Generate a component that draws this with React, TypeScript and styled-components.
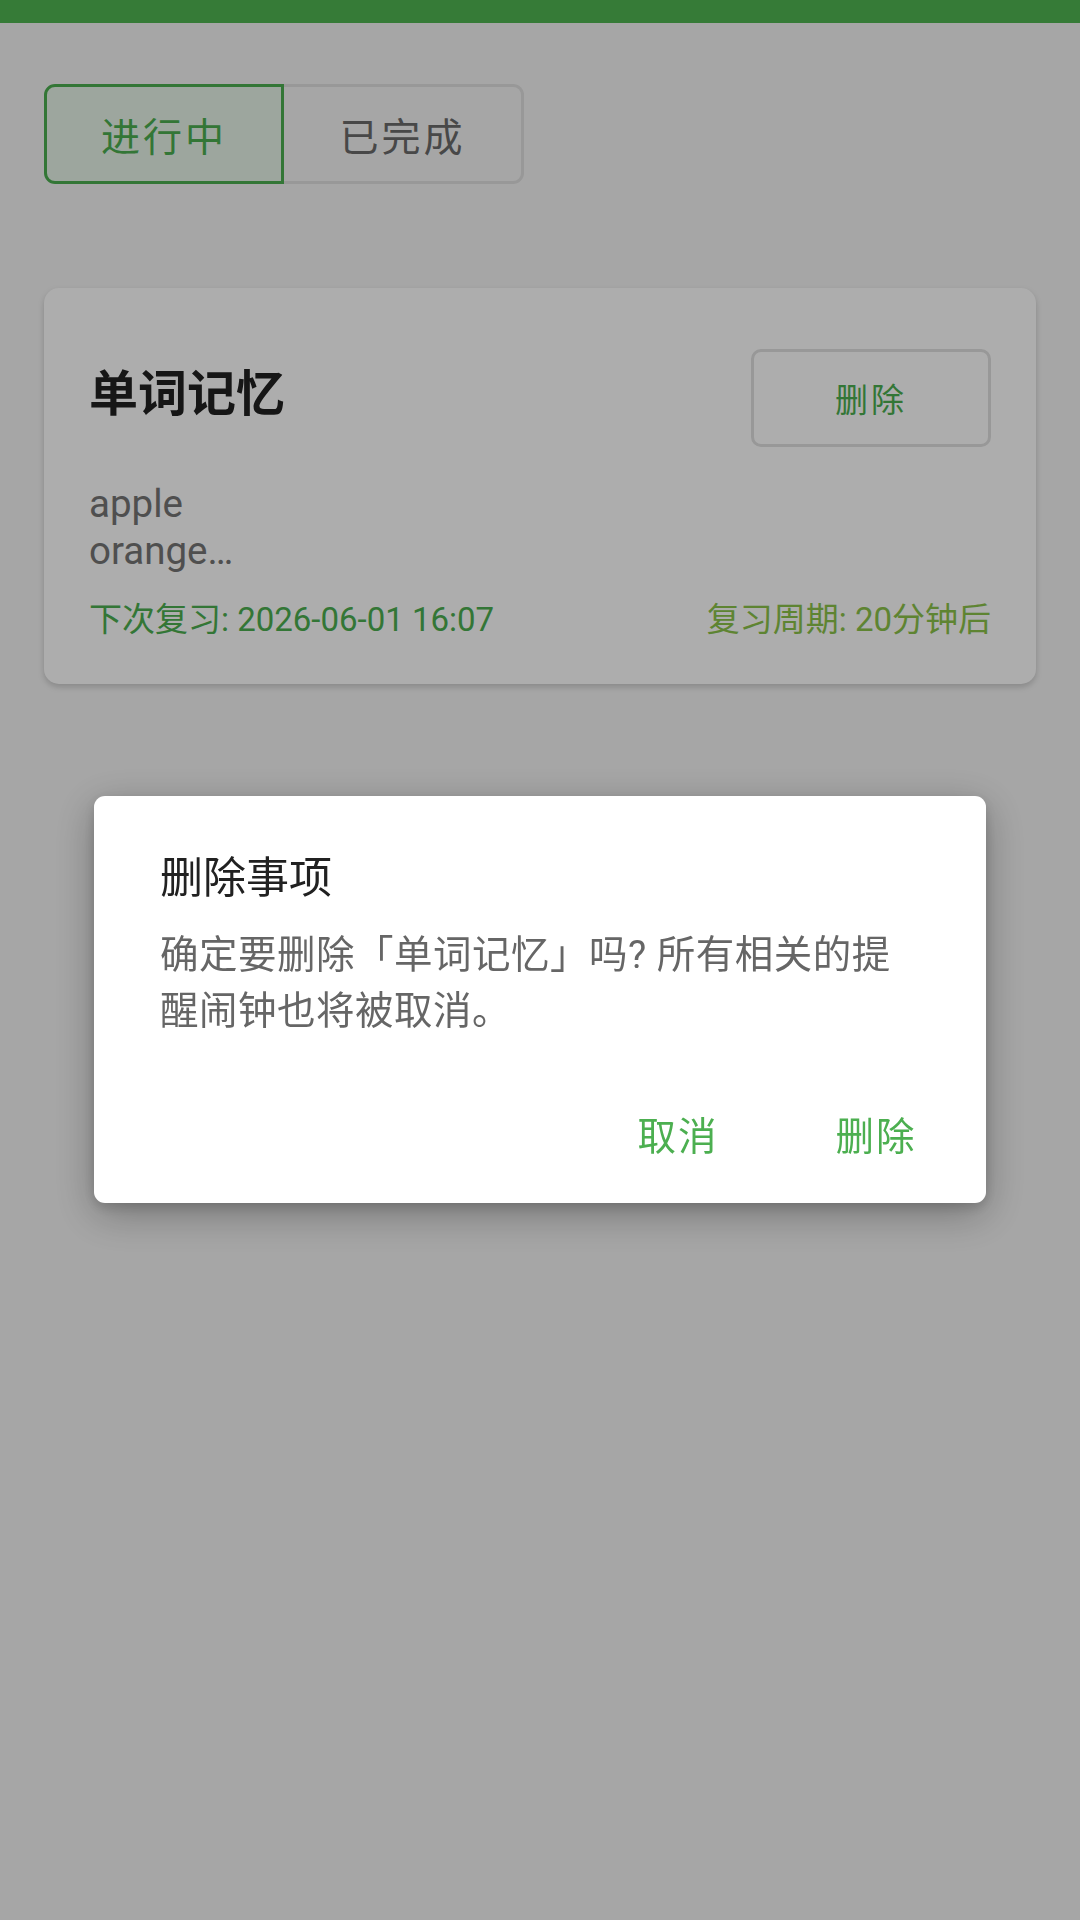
import styled, { createGlobalStyle } from "styled-components";

const GlobalStyle = createGlobalStyle`
  html, body {
    margin: 0;
    padding: 0;
    background: #f5f5f5;
  }
  body {
    font-family: Roboto, "Noto Sans CJK SC", sans-serif;
    -webkit-font-smoothing: antialiased;
  }
  * {
    box-sizing: border-box;
  }
`;

const Screen = styled.div`
  width: 1080px;
  height: 1920px;
  background: #f5f5f5;
  overflow: hidden;
`;

const StatusBar = styled.div`
  height: 23px;
  background: #367b37;
  position: relative;
  z-index: 20;
`;

const Content = styled.div`
  padding: 61px 44px 0;
`;

const Tabs = styled.div`
  display: flex;
`;

const Tab = styled.button<{ $active?: boolean; $side: "left" | "right" }>`
  width: 240px;
  height: 100px;
  margin: 0;
  padding: 0;
  font-family: inherit;
  font-size: 39px;
  letter-spacing: 3px;
  color: ${(p) => (p.$active ? "#4caf50" : "#6a6a6a")};
  background: ${(p) => (p.$active ? "#e8f5e9" : "transparent")};
  border: 3px solid ${(p) => (p.$active ? "#4caf50" : "#e0e0e0")};
  ${(p) =>
    p.$side === "left"
      ? "border-radius: 11px 0 0 11px;"
      : "border-radius: 0 11px 11px 0; border-left: none;"}
`;

const Card = styled.div`
  margin-top: 104px;
  background: #ffffff;
  border-radius: 15px;
  padding: 44px 45px 42px;
  box-shadow: 0 3px 6px rgba(0, 0, 0, 0.18);
`;

const CardHeader = styled.div`
  display: flex;
  justify-content: space-between;
  align-items: center;
  min-height: 132px;
`;

const CardTitle = styled.h2`
  margin: 0 0 18px;
  font-size: 49px;
  font-weight: 700;
  color: #212121;
`;

const OutlineButton = styled.button`
  width: 240px;
  height: 98px;
  padding: 0;
  font-family: inherit;
  font-size: 33px;
  letter-spacing: 3px;
  color: #4caf50;
  background: transparent;
  border: 3px solid #e0e0e0;
  border-radius: 10px;
`;

const Preview = styled.p`
  margin: 16px 0 0;
  font-size: 38.5px;
  line-height: 47px;
  color: #757575;
`;

const CardFooter = styled.div`
  display: flex;
  justify-content: space-between;
  margin-top: 23px;
  font-size: 33px;
  line-height: 45px;
`;

const FooterText = styled.span<{ $light?: boolean }>`
  color: ${(p) => (p.$light ? "#8bc34a" : "#4caf50")};
`;

const Scrim = styled.div`
  position: fixed;
  inset: 0;
  z-index: 10;
  background: rgba(0, 0, 0, 0.32);
  display: flex;
  justify-content: center;
  align-items: center;
  padding-top: 78px;
`;

const Dialog = styled.div`
  width: 892px;
  background: #ffffff;
  border-radius: 11px;
  box-shadow: 0 11px 40px rgba(0, 0, 0, 0.3), 0 4px 12px rgba(0, 0, 0, 0.15);
`;

const DialogBody = styled.div`
  padding: 54px 66px 0;
`;

const DialogTitle = styled.h3`
  margin: 0;
  font-size: 43px;
  line-height: 56px;
  font-weight: 400;
  color: #212121;
`;

const DialogMessage = styled.p`
  max-width: 745px;
  margin: 21px 0 0;
  font-size: 38.5px;
  line-height: 56px;
  letter-spacing: 0.5px;
  color: #666666;
`;

const DialogActions = styled.div`
  display: flex;
  justify-content: flex-end;
  gap: 22px;
  padding: 45px 22px 20px;
`;

const TextButton = styled.button`
  min-width: 176px;
  height: 99px;
  padding: 0 22px;
  font-family: inherit;
  font-size: 38.5px;
  letter-spacing: 2px;
  color: #4caf50;
  background: transparent;
  border: none;
`;

export default function App() {
  return (
    <Screen>
      <GlobalStyle />
      <StatusBar />
      <Content>
        <Tabs>
          <Tab $active $side="left">进行中</Tab>
          <Tab $side="right">已完成</Tab>
        </Tabs>

        <Card>
          <CardHeader>
            <CardTitle>单词记忆</CardTitle>
            <OutlineButton>删除</OutlineButton>
          </CardHeader>
          <Preview>
            apple
            <br />
            orange…
          </Preview>
          <CardFooter>
            <FooterText>下次复习: 2026-06-01 16:07</FooterText>
            <FooterText $light>复习周期: 20分钟后</FooterText>
          </CardFooter>
        </Card>
      </Content>

      <Scrim>
        <Dialog>
          <DialogBody>
            <DialogTitle>删除事项</DialogTitle>
            <DialogMessage>
              确定要删除「单词记忆」吗? 所有相关的提醒闹钟也将被取消。
            </DialogMessage>
          </DialogBody>
          <DialogActions>
            <TextButton>取消</TextButton>
            <TextButton>删除</TextButton>
          </DialogActions>
        </Dialog>
      </Scrim>
    </Screen>
  );
}
